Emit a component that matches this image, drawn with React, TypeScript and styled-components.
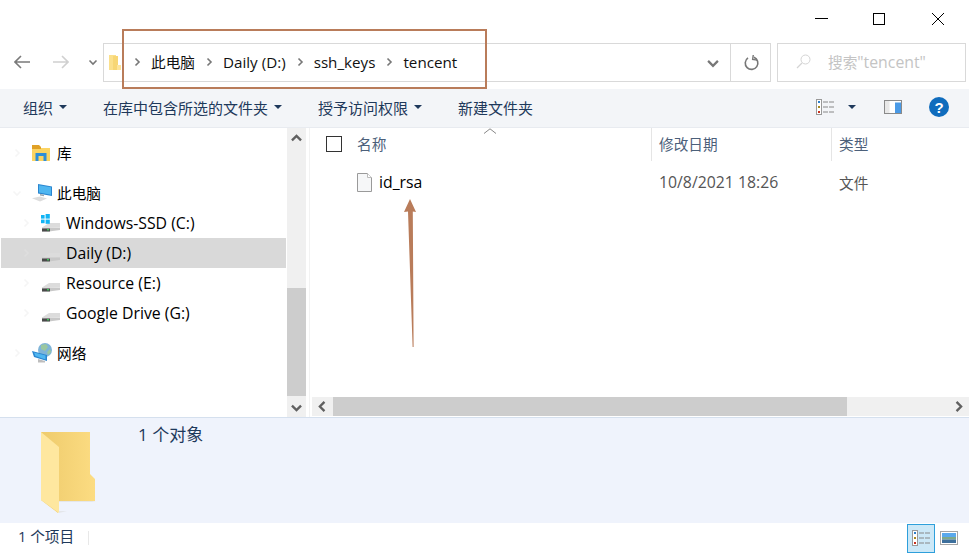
import React from "react";
import styled, { createGlobalStyle } from "styled-components";

const GlobalStyle = createGlobalStyle`
  html, body { margin: 0; padding: 0; background: #fff; }
  body {
    font-family: "Open Sans", "Noto Sans CJK SC", sans-serif;
    font-size: 14.67px;
    color: #000;
  }
`;

const Window = styled.div`
  position: relative;
  width: 969px;
  height: 553px;
  display: flex;
  flex-direction: column;
  overflow: hidden;
  background: #fff;
`;

const TitleBar = styled.div`
  height: 43px;
  display: flex;
  justify-content: flex-end;
  align-items: flex-start;
  padding: 13px 25px 0 0;
  gap: 45px;
  box-sizing: border-box;
`;

const MaxGlyph = styled.svg`
  margin-right: 2px;
`;

const AddressRow = styled.div`
  height: 46px;
  display: flex;
  align-items: flex-start;
  padding-left: 14px;
`;

const NavButton = styled.div<{ $width: number }>`
  width: ${(p) => p.$width}px;
  height: 38px;
  display: flex;
  align-items: center;
`;

const AddressBox = styled.div`
  width: 668px;
  height: 39px;
  box-sizing: border-box;
  border: 1px solid #d9d9d9;
  display: flex;
  align-items: center;
  padding-left: 5px;
`;

const Crumbs = styled.div`
  flex: 1;
  display: flex;
  align-items: center;
  padding: 0 0 2px 11px;
  gap: 9px;
`;

const Crumb = styled.span`
  color: #111;
  line-height: 20px;
`;

const CrumbLatin = styled.span`
  font-size: 15.2px;
`;

const Latin = styled.span`
  font-size: 15.8px;
`;

const AddressDrop = styled.div`
  width: 24px;
  margin-right: 5px;
  display: flex;
  justify-content: center;
`;

const RefreshCell = styled.div`
  width: 37px;
  padding-left: 2px;
  height: 100%;
  border-left: 1px solid #d9d9d9;
  display: flex;
  align-items: center;
  justify-content: center;
`;

const SearchBox = styled.div`
  width: 189px;
  height: 39px;
  margin-left: 6px;
  box-sizing: border-box;
  border: 1px solid #d9d9d9;
  display: flex;
  align-items: center;
  padding: 0 0 2px 18px;
  gap: 17px;
  color: #c4c4c4;
`;

const Toolbar = styled.div`
  height: 39px;
  background: #f3f5f8;
  border-bottom: 1px solid #e8ebf0;
  box-sizing: border-box;
  display: flex;
  align-items: center;
  padding: 0 0 2px 23px;
  color: #1e395b;
  font-size: 15px;
`;

const ToolItem = styled.div<{ $width: number }>`
  width: ${(p) => p.$width}px;
  display: flex;
  align-items: center;
  gap: 6px;
  white-space: nowrap;
`;

const Caret = styled.span`
  width: 0;
  height: 0;
  border-left: 4px solid transparent;
  border-right: 4px solid transparent;
  border-top: 4px solid #1e395b;
`;

const ToolIcons = styled.div`
  margin-left: auto;
  display: flex;
  align-items: center;
  padding-right: 20px;
`;

const PaneGlyph = styled.svg`
  margin-left: 28px;
`;

const ViewCaret = styled(Caret)`
  margin-left: 14px;
`;

const HelpBadge = styled.div`
  width: 20px;
  height: 20px;
  border-radius: 50%;
  background: #0f6cbd;
  color: #fff;
  font-family: "Liberation Sans", sans-serif;
  font-weight: 700;
  font-size: 15px;
  display: flex;
  align-items: center;
  justify-content: center;
  margin-left: 27px;
`;

const Main = styled.div`
  height: 289px;
  display: flex;
`;

const Sidebar = styled.div`
  width: 287px;
  box-sizing: border-box;
  padding: 10px 1px 0 1px;
  flex-shrink: 0;
`;

const NavRow = styled.div<{ $level: number; $selected?: boolean; $gap?: boolean }>`
  height: 30px;
  box-sizing: border-box;
  display: flex;
  align-items: center;
  margin-top: ${(p) => (p.$gap ? 10 : 0)}px;
  padding-left: ${(p) => (p.$level ? 20 : 11)}px;
  padding-bottom: 1px;
  background: ${(p) => (p.$selected ? "#d9d9d9" : "transparent")};
`;

const TreeArrow = styled.div`
  width: 20px;
  display: flex;
  align-items: center;
`;

const NavIcon = styled.div`
  width: 25px;
  display: flex;
  align-items: center;
`;

const VScroll = styled.div`
  width: 19px;
  margin-right: 3px;
  background: #f0f0f0;
  display: flex;
  flex-direction: column;
  flex-shrink: 0;
`;

const ScrollBtn = styled.div`
  height: 20px;
  display: flex;
  align-items: center;
  justify-content: center;
  flex-shrink: 0;
`;

const VThumbGap = styled.div`
  flex: 1;
`;

const VThumb = styled.div`
  height: 108px;
  margin-bottom: 1px;
  background: #cdcdcd;
`;

const Content = styled.div`
  flex: 1;
  display: flex;
  flex-direction: column;
  border-left: 1px solid #f2f2f2;
  min-width: 0;
`;

const ColumnHeader = styled.div`
  height: 33px;
  display: grid;
  grid-template-columns: 341px 180px 1fr;
  color: #4c607a;
  position: relative;
`;

const HeaderCell = styled.div<{ $first?: boolean }>`
  display: flex;
  align-items: center;
  padding-left: ${(p) => (p.$first ? 16 : 7)}px;
  padding-bottom: 2px;
  border-left: ${(p) => (p.$first ? "none" : "1px solid #e5e5e5")};
`;

const Checkbox = styled.div`
  width: 16px;
  height: 16px;
  border: 1px solid #333;
  box-sizing: border-box;
  margin-right: 15px;
`;

const SortMark = styled.div`
  position: absolute;
  left: 173px;
  top: 0;
  line-height: 0;
`;

const FileRow = styled.div`
  height: 30px;
  margin-top: 6px;
  display: grid;
  grid-template-columns: 341px 180px 1fr;
  align-items: center;
`;

const FileName = styled.div`
  display: flex;
  align-items: center;
  gap: 7px;
  padding-left: 47px;
`;

const FileMeta = styled.div`
  padding-left: 8px;
  color: #555;
`;

const HScroll = styled.div`
  margin-top: auto;
  margin-bottom: 1px;
  margin-left: 2px;
  height: 19px;
  background: #f0f0f0;
  display: flex;
  align-items: center;
`;

const HBtn = styled.div`
  width: 21px;
  height: 19px;
  display: flex;
  align-items: center;
  justify-content: center;
  flex-shrink: 0;
`;

const HThumb = styled.div`
  width: 514px;
  height: 19px;
  background: #cdcdcd;
`;

const HTrack = styled.div`
  flex: 1;
`;

const DetailPane = styled.div`
  height: 106px;
  background: #eff3fc;
  border-top: 1px solid #d5e0ee;
  box-sizing: border-box;
  display: flex;
  padding: 14px 0 0 41px;
`;

const DetailText = styled.div`
  font-size: 17px;
  line-height: 20px;
  color: #1e395b;
  margin-left: 41px;
  margin-top: -7px;
`;

const StatusBar = styled.div`
  flex: 1;
  display: flex;
  align-items: center;
  padding-left: 18px;
  color: #1e395b;
`;

const StatusCount = styled.div`
  width: 70px;
  height: 14px;
  line-height: 11px;
  border-right: 1px solid #e8e8e8;
`;

const ViewSwitch = styled.div`
  margin-left: auto;
  padding-right: 8px;
  display: flex;
  align-items: center;
  gap: 2px;
`;

const ViewButton = styled.div<{ $active?: boolean }>`
  width: ${(p) => (p.$active ? 28 : 24)}px;
  height: 29px;
  box-sizing: border-box;
  border: 1px solid ${(p) => (p.$active ? "#2e9fdb" : "transparent")};
  background: ${(p) => (p.$active ? "#cce8f7" : "transparent")};
  display: flex;
  align-items: center;
  justify-content: center;
`;

const Annotation = styled.div`
  position: absolute;
  left: 122px;
  top: 29px;
  width: 365px;
  height: 60px;
  box-sizing: border-box;
  border: 2px solid #b97c5a;
  pointer-events: none;
`;

const ArrowMark = styled.svg`
  position: absolute;
  left: 400px;
  top: 195px;
`;

const Chevron = ({ dir, color = "#666", size = 10, w = 1.6 }: { dir: "l" | "r" | "u" | "d"; color?: string; size?: number; w?: number }) => {
  const d = { l: "M6.5 1.5L3 5l3.5 3.5", r: "M3.5 1.5L7 5 3.5 8.5", u: "M1.5 6.5L5 3l3.5 3.5", d: "M1.5 3.5L5 7l3.5-3.5" }[dir];
  return (
    <svg width={size} height={size} viewBox="0 0 10 10" fill="none">
      <path d={d} stroke={color} strokeWidth={w} />
    </svg>
  );
};

const NavArrow = ({ flip, color }: { flip?: boolean; color: string }) => (
  <svg width="16" height="14" viewBox="0 0 16 14" fill="none" style={flip ? { transform: "scaleX(-1)" } : undefined}>
    <path d="M1 7h15M7 1L1 7l6 6" stroke={color} strokeWidth="1.6" />
  </svg>
);

const SmallFolder = () => (
  <svg width="12" height="18" viewBox="0 0 12 18">
    <path d="M0 1h7v15H0z" fill="#fbe08c" />
    <path d="M4 2h5v14H4z" fill="#f7d675" />
    <path d="M8 11h4v5H8z" fill="#fde49b" />
  </svg>
);

const DriveIcon = ({ windows }: { windows?: boolean }) => (
  <svg width="20" height="18" viewBox="0 0 20 18">
    <path d="M1 13.5L8 9h11v4z" fill="#dcdcdc" />
    <path d="M1 13.5h18v2.5L8 17.5H1z" fill="#c8c8c8" />
    <path d="M1 14.5h8v3H1z" fill="#4a4a4a" />
    <rect x="6" y="15" width="2" height="1.4" fill="#3fc45a" />
    {windows && (
      <g fill="#12b4f4">
        <rect x="0" y="1" width="3.6" height="3.6" />
        <rect x="4.6" y="0" width="4.2" height="4.6" />
        <rect x="0" y="5.6" width="3.6" height="3.6" />
        <rect x="4.6" y="5.6" width="4.2" height="4.2" />
      </g>
    )}
  </svg>
);

const LibraryIcon = () => (
  <svg width="18" height="16" viewBox="0 0 18 16">
    <path d="M0 1h7l2 2h9v13H0z" fill="#fcd462" />
    <path d="M0 0h7l2 2v2H0z" fill="#e0a126" />
    <path d="M3.5 16V8h11v8h-3v-5h-5v5z" fill="#2f8ed8" />
  </svg>
);

const ComputerIcon = () => (
  <svg width="20" height="19" viewBox="0 0 20 19">
    <path d="M6 1l14 2.5V13L6 10.5z" fill="#2a86d0" />
    <path d="M7 2.2l12 2.1v7.5L7 9.6z" fill="#4fb6f0" />
    <path d="M8 11l4 .7v1.6l-4-.7z" fill="#9aa5ad" />
    <path d="M0 15.2l8-1.6 7 1.9-7 3z" fill="#dcdcdc" />
  </svg>
);

const NetworkIcon = () => (
  <svg width="20" height="20" viewBox="0 0 20 20">
    <circle cx="13" cy="7" r="7" fill="#7fb4d8" />
    <path d="M9 2l5-1 2 3-3 4-4-2zM15 9l3-3 1 3-3 3z" fill="#9ac7a0" />
    <path d="M0 8l15 4v6L2 14z" fill="#2a86d0" />
    <path d="M2 9.4l11.5 3.2v3.8L3.4 13z" fill="#4fb6f0" />
    <path d="M6 16l7 2v1.5H6z" fill="#bdbdbd" />
  </svg>
);

const FileIcon = () => (
  <svg width="15" height="19" viewBox="0 0 15 19">
    <path d="M.5.5h10l4 4v14H.5z" fill="#f6f7f8" stroke="#9a9a9a" />
    <path d="M10.5.5v4h4" fill="#fff" stroke="#bbb" />
  </svg>
);

const BigFolder = () => (
  <svg width="56" height="82" viewBox="0 0 56 82">
    <defs>
      <linearGradient id="backFill" x1="0" x2="1" y1="0" y2="0">
        <stop offset="0" stopColor="#eecb6c" />
        <stop offset="1" stopColor="#fcdc82" />
      </linearGradient>
    </defs>
    <path d="M0 0h49v42l5 5v22H17v12L0 68z" fill="url(#backFill)" />
    <path d="M0 0l18 15v66L0 68z" fill="#fee79f" />
    <path d="M18 69h37l-4 1H18zM18 81l8-2h-8z" fill="#e4e6ea" />
  </svg>
);

const DetailsGlyph = () => (
  <svg width="18" height="16" viewBox="0 0 18 16">
    <rect x=".5" y=".5" width="5" height="15" fill="#fff" stroke="#999" />
    <rect x="2" y="2" width="2" height="2" fill="#2c7fc9" />
    <rect x="2" y="7" width="2" height="2" fill="#a88a1f" />
    <rect x="2" y="12" width="2" height="2" fill="#c8321f" />
    <path d="M7 3h11M7 8h11M7 13h11" stroke="#888" strokeWidth="1" strokeDasharray="5 1" />
  </svg>
);

const PreviewGlyph = () => (
  <svg width="18" height="14" viewBox="0 0 18 14">
    <rect x=".5" y=".5" width="17" height="13" fill="#fff" stroke="#a5a5a5" />
    <rect x="2" y="2" width="14" height="4" fill="#5aa9ec" />
    <rect x="2" y="6" width="14" height="2.5" fill="#7fa98a" />
    <rect x="2" y="8.5" width="14" height="3.5" fill="#3d6f9c" />
  </svg>
);

const drives = [
  { label: "Windows-SSD (C:)", windows: true },
  { label: "Daily (D:)", selected: true },
  { label: "Resource (E:)" },
  { label: "Google Drive (G:)" },
];

export default function App() {
  return (
    <>
      <GlobalStyle />
      <Window>
        <TitleBar>
          <svg width="13" height="12" viewBox="0 0 13 12">
            <path d="M0 5.5h13" stroke="#000" />
          </svg>
          <MaxGlyph width="12" height="12" viewBox="0 0 12 12" fill="none">
            <rect x=".5" y=".5" width="11" height="11" stroke="#000" />
          </MaxGlyph>
          <svg width="12" height="12" viewBox="0 0 12 12" fill="none">
            <path d="M0 0l12 12M12 0L0 12" stroke="#000" />
          </svg>
        </TitleBar>
        <AddressRow>
          <NavButton $width={39}>
            <NavArrow color="#7a7a7a" />
          </NavButton>
          <NavButton $width={35}>
            <NavArrow flip color="#d0d0d0" />
          </NavButton>
          <NavButton $width={15}>
            <Chevron dir="d" color="#777" />
          </NavButton>
          <AddressBox>
            <SmallFolder />
            <Crumbs>
              <Chevron dir="r" color="#777" />
              <Crumb>此电脑</Crumb>
              <Chevron dir="r" color="#777" />
              <Crumb>
                <CrumbLatin>Daily (D:)</CrumbLatin>
              </Crumb>
              <Chevron dir="r" color="#777" />
              <Crumb>
                <CrumbLatin>ssh_keys</CrumbLatin>
              </Crumb>
              <Chevron dir="r" color="#777" />
              <Crumb>
                <CrumbLatin>tencent</CrumbLatin>
              </Crumb>
            </Crumbs>
            <AddressDrop>
              <Chevron dir="d" color="#777" size={14} />
            </AddressDrop>
            <RefreshCell>
              <svg width="16" height="16" viewBox="0 0 16 16" fill="none">
                <path d="M10 2.3A6.3 6.3 0 1 1 4 2.9" stroke="#777" strokeWidth="1.6" />
                <path d="M9 0v4.5h4.5" stroke="#777" strokeWidth="1.4" transform="rotate(8 9 2)" />
              </svg>
            </RefreshCell>
          </AddressBox>
          <SearchBox>
            <svg width="15" height="15" viewBox="0 0 15 15" fill="none">
              <circle cx="9.5" cy="5.5" r="4.5" stroke="#d4d4d4" />
              <path d="M6 9l-5 5" stroke="#d4d4d4" strokeWidth="1.3" />
            </svg>
            <span>
              搜索<Latin>"tencent"</Latin>
            </span>
          </SearchBox>
        </AddressRow>
        <Toolbar>
          <ToolItem $width={80}>
            组织 <Caret />
          </ToolItem>
          <ToolItem $width={215}>
            在库中包含所选的文件夹 <Caret />
          </ToolItem>
          <ToolItem $width={140}>
            授予访问权限 <Caret />
          </ToolItem>
          <ToolItem $width={100}>新建文件夹</ToolItem>
          <ToolIcons>
            <DetailsGlyph />
            <ViewCaret />
            <PaneGlyph width="18" height="14" viewBox="0 0 18 14">
              <rect x=".5" y=".5" width="17" height="13" fill="#fff" stroke="#8a8a8a" />
              <rect x="1" y="1" width="4.5" height="12" fill="#e8e8e8" />
              <rect x="11" y="2.5" width="6" height="10.5" fill="#4a9ae6" />
            </PaneGlyph>
            <HelpBadge>?</HelpBadge>
          </ToolIcons>
        </Toolbar>
        <Main>
          <Sidebar>
            <NavRow $level={0}>
              <TreeArrow>
                <Chevron dir="r" color="#f5f5f5" />
              </TreeArrow>
              <NavIcon>
                <LibraryIcon />
              </NavIcon>
              库
            </NavRow>
            <NavRow $level={0} $gap>
              <TreeArrow>
                <Chevron dir="d" color="#f5f5f5" />
              </TreeArrow>
              <NavIcon>
                <ComputerIcon />
              </NavIcon>
              此电脑
            </NavRow>
            {drives.map((d) => (
              <NavRow key={d.label} $level={1} $selected={d.selected}>
                <TreeArrow>
                  <Chevron dir="r" color={d.selected ? "#dedede" : "#f5f5f5"} />
                </TreeArrow>
                <NavIcon>
                  <DriveIcon windows={d.windows} />
                </NavIcon>
                <Latin>{d.label}</Latin>
              </NavRow>
            ))}
            <NavRow $level={0} $gap>
              <TreeArrow>
                <Chevron dir="r" color="#f5f5f5" />
              </TreeArrow>
              <NavIcon>
                <NetworkIcon />
              </NavIcon>
              网络
            </NavRow>
          </Sidebar>
          <VScroll>
            <ScrollBtn>
              <Chevron dir="u" color="#606060" size={13} w={1.8} />
            </ScrollBtn>
            <VThumbGap />
            <VThumb />
            <ScrollBtn>
              <Chevron dir="d" color="#606060" size={13} w={1.8} />
            </ScrollBtn>
          </VScroll>
          <Content>
            <ColumnHeader>
              <SortMark>
                <svg width="14" height="6" viewBox="0 0 14 6" fill="none">
                  <path d="M1 5.5L7 .8l6 4.7" stroke="#888" />
                </svg>
              </SortMark>
              <HeaderCell $first>
                <Checkbox />
                名称
              </HeaderCell>
              <HeaderCell>修改日期</HeaderCell>
              <HeaderCell>类型</HeaderCell>
            </ColumnHeader>
            <FileRow>
              <FileName>
                <FileIcon />
                <Latin>id_rsa</Latin>
              </FileName>
              <FileMeta>
                <Latin>10/8/2021 18:26</Latin>
              </FileMeta>
              <FileMeta>文件</FileMeta>
            </FileRow>
            <HScroll>
              <HBtn>
                <Chevron dir="l" color="#606060" size={13} w={1.8} />
              </HBtn>
              <HThumb />
              <HTrack />
              <HBtn>
                <Chevron dir="r" color="#606060" size={13} w={1.8} />
              </HBtn>
            </HScroll>
          </Content>
        </Main>
        <DetailPane>
          <BigFolder />
          <DetailText>1 个对象</DetailText>
        </DetailPane>
        <StatusBar>
          <StatusCount>1 个项目</StatusCount>
          <ViewSwitch>
            <ViewButton $active>
              <DetailsGlyph />
            </ViewButton>
            <ViewButton>
              <PreviewGlyph />
            </ViewButton>
          </ViewSwitch>
        </StatusBar>
        <Annotation />
        <ArrowMark width="24" height="156" viewBox="0 0 24 156">
          <path d="M10 4l6 13-3.2-.6L13.6 152h-1L8 16.4 4 17z" fill="#b97c5a" />
        </ArrowMark>
      </Window>
    </>
  );
}
